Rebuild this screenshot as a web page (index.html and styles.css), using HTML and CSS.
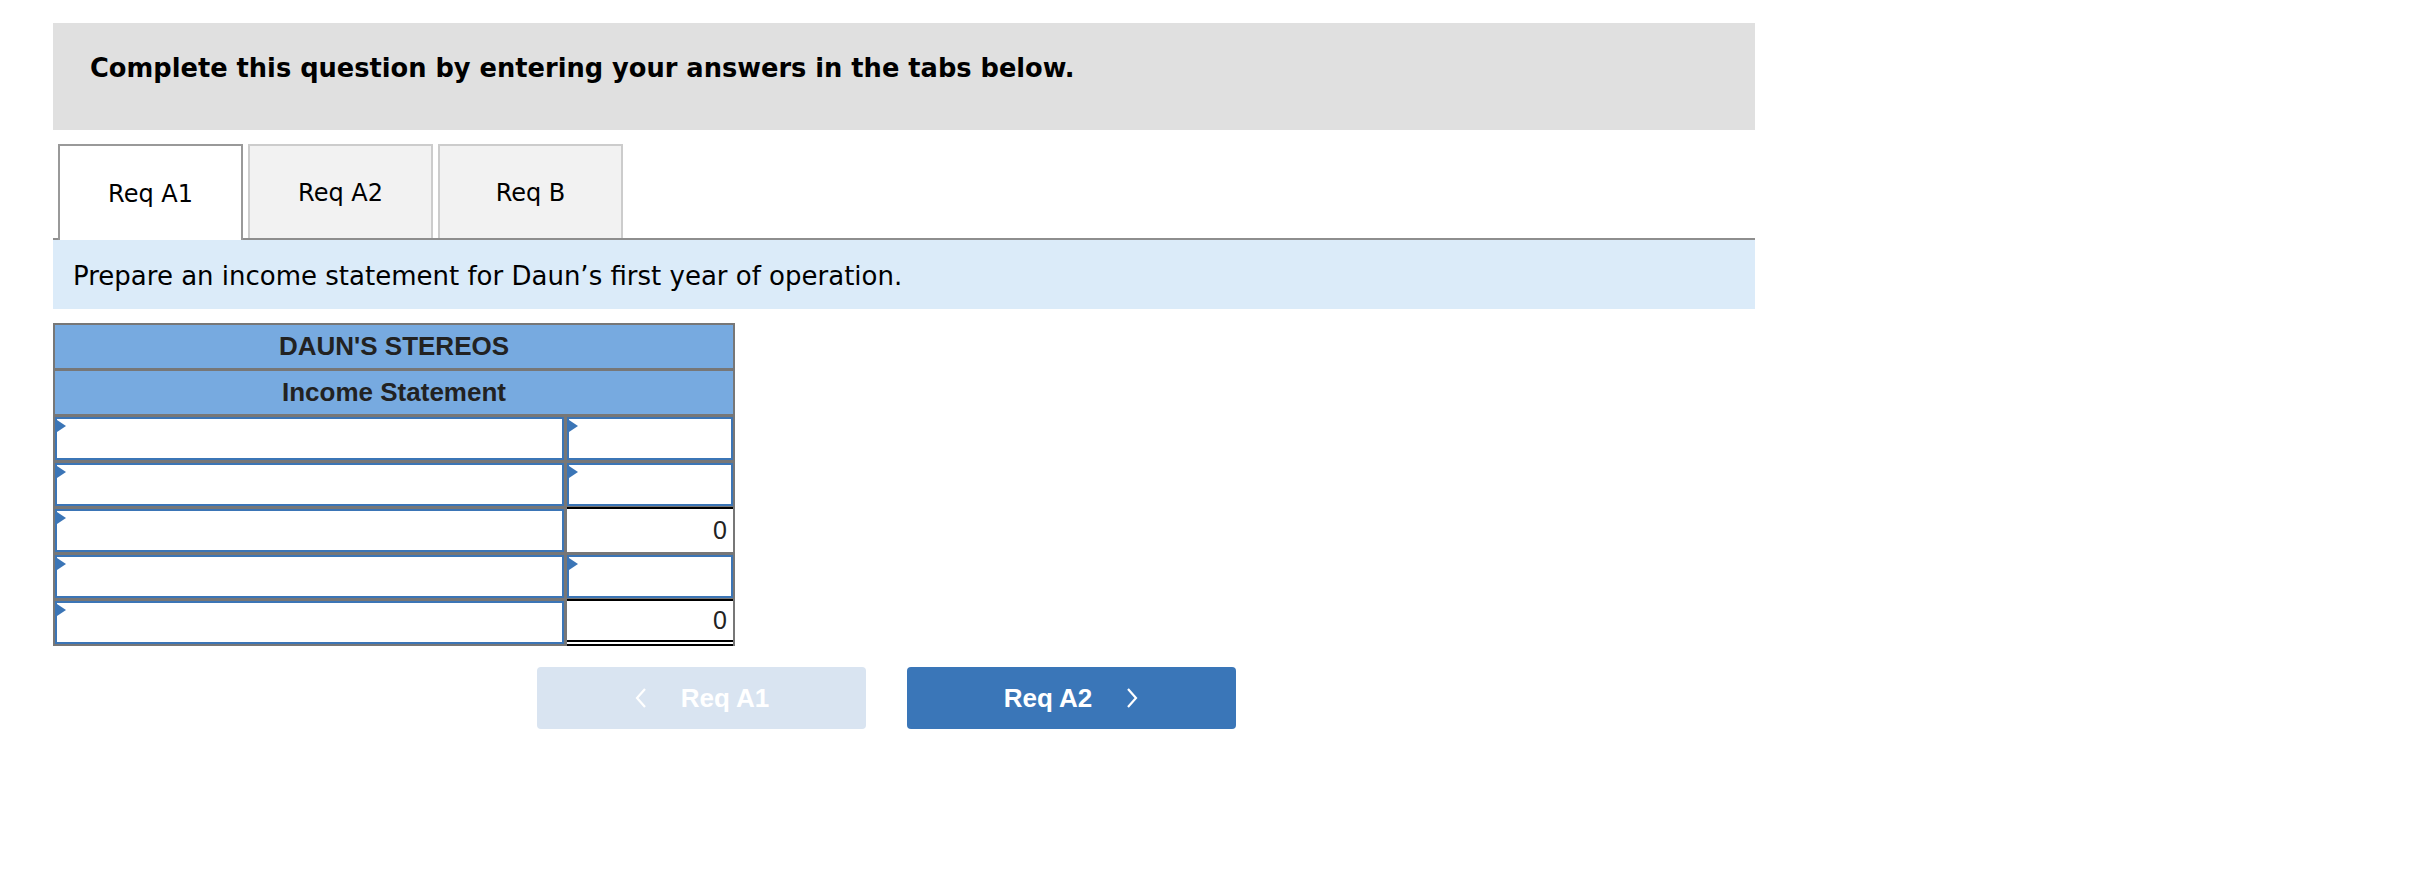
FILE: index.html
```html
<!DOCTYPE html>
<html>
<head>
<meta charset="utf-8">
<link rel="stylesheet" href="styles.css">
</head>
<body>
<div class="page">
  <div class="prompt">Complete this question by entering your answers in the tabs below.</div>
  <div class="tabs">
    <div class="tab active">Req A1</div>
    <div class="tab">Req A2</div>
    <div class="tab">Req B</div>
  </div>
  <div class="instruction">Prepare an income statement for Daun’s first year of operation.</div>
  <div class="stmt">
    <div class="hdr">DAUN'S STEREOS</div>
    <div class="hdr">Income Statement</div>
    <div class="inp"></div><div class="inp"></div>
    <div class="inp"></div><div class="inp"></div>
    <div class="inp"></div><div class="val total">0</div>
    <div class="inp"></div><div class="inp"></div>
    <div class="inp"></div><div class="val grand">0</div>
  </div>
  <div class="nav">
    <div class="btn prev">
      <svg class="chev" width="14" height="20" viewBox="0 0 14 20"><polyline points="11,1 3,10 11,19" fill="none" stroke="#fff" stroke-width="2.2"/></svg>
      <span>Req A1</span>
    </div>
    <div class="btn next">
      <span>Req A2</span>
      <svg class="chev" width="14" height="20" viewBox="0 0 14 20"><polyline points="3,1 11,10 3,19" fill="none" stroke="#fff" stroke-width="2.2"/></svg>
    </div>
  </div>
</div>
</body>
</html>
```

FILE: styles.css
```css
html, body {
  margin: 0;
  padding: 0;
  background: #fff;
}
body {
  font-family: "DejaVu Sans", Verdana, sans-serif;
  color: #000;
}
.page {
  width: 1702px;
  padding: 23px 0 0 53px;
}
.prompt {
  box-sizing: border-box;
  height: 107px;
  background: #e0e0e0;
  padding: 30px 0 0 37px;
  font-size: 25.7px;
  line-height: 30px;
  font-weight: bold;
}
.tabs {
  display: flex;
  gap: 5px;
  margin-top: 14px;
  padding-left: 5px;
  border-bottom: 2px solid #8e8e8e;
}
.tab {
  box-sizing: border-box;
  width: 185px;
  height: 94px;
  display: flex;
  align-items: center;
  justify-content: center;
  padding-top: 2px;
  background: #f2f2f2;
  border: 2px solid #cccccc;
  border-bottom: none;
  font-size: 24px;
}
.tab.active {
  background: #fff;
  border-color: #999;
  height: 96px;
  margin-bottom: -2px;
}
.instruction {
  box-sizing: border-box;
  height: 69px;
  background: #dbebf9;
  padding: 21px 0 0 20px;
  font-size: 26px;
  line-height: 30px;
}
.stmt {
  margin-top: 14px;
  width: 682px;
  box-sizing: border-box;
  border: 2px solid #777;
  background: #777;
  display: grid;
  grid-template-columns: 509px 166px;
  grid-auto-rows: 43px;
  gap: 3px;
  font-family: "Liberation Sans", Arial, sans-serif;
}
.hdr {
  grid-column: 1 / 3;
  background: #77aae0;
  color: #222;
  font-weight: bold;
  font-size: 26px;
  display: flex;
  align-items: center;
  justify-content: center;
}
.inp {
  position: relative;
  background: #fff;
  border: 2px solid #3b75b6;
}
.inp::before {
  content: "";
  position: absolute;
  left: 0;
  top: 1px;
  border-top: 6px solid transparent;
  border-bottom: 6px solid transparent;
  border-left: 9px solid #3b75b6;
}
.val {
  background: #fff;
  color: #222;
  font-size: 25px;
  display: flex;
  align-items: center;
  justify-content: flex-end;
  padding-right: 6px;
  box-shadow: 0 -2px 0 #000;
}
.val.grand {
  border-bottom: 6px double #000;
  margin-bottom: -2px;
}
.nav {
  display: flex;
  gap: 41px;
  margin: 21px 0 0 484px;
}
.btn {
  width: 329px;
  height: 62px;
  border-radius: 4px;
  display: flex;
  align-items: center;
  justify-content: center;
  gap: 33px;
  color: #fff;
  font-family: "Liberation Sans", Arial, sans-serif;
  font-weight: bold;
  font-size: 26px;
}
.btn.prev {
  background: #d9e4f1;
}
.btn.next {
  background: #3a76b8;
}
.chev {
  display: block;
}
```
